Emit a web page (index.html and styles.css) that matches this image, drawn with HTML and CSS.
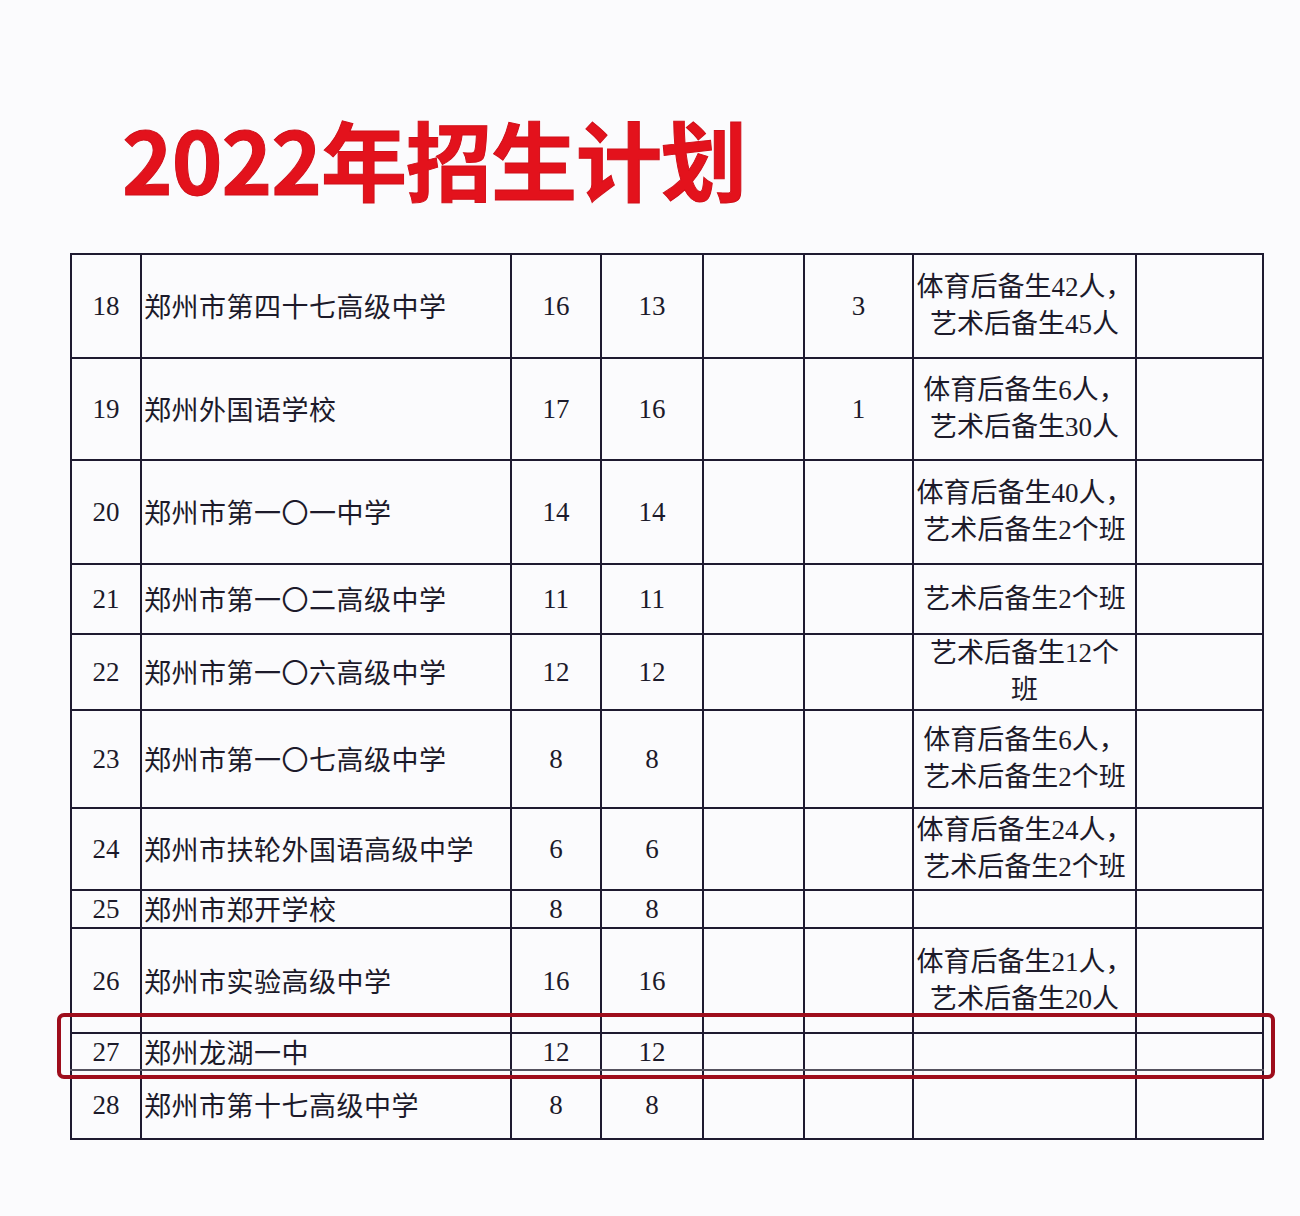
FILE: index.html
```html
<!DOCTYPE html>
<html lang="zh-CN">
<head>
<meta charset="utf-8">
<title>2022年招生计划</title>
<link rel="stylesheet" href="styles.css">
</head>
<body>
<div class="page">
  <h1 class="title">2022年招生计划</h1>
  <div class="table-wrap">
    <table class="plan">
      <colgroup>
        <col class="c-no"><col class="c-name"><col class="c-a"><col class="c-b"><col class="c-c"><col class="c-d"><col class="c-note"><col class="c-last">
      </colgroup>
      <tbody>
        <tr class="h104"><td class="num">18</td><td class="name">郑州市第四十七高级中学</td><td class="num">16</td><td class="num">13</td><td></td><td class="num">3</td><td class="note">体育后备生42人，<br>艺术后备生45人</td><td></td></tr>
        <tr class="h103"><td class="num">19</td><td class="name">郑州外国语学校</td><td class="num">17</td><td class="num">16</td><td></td><td class="num">1</td><td class="note">体育后备生6人，<br>艺术后备生30人</td><td></td></tr>
        <tr class="h104"><td class="num">20</td><td class="name">郑州市第一〇一中学</td><td class="num">14</td><td class="num">14</td><td></td><td></td><td class="note">体育后备生40人，<br>艺术后备生2个班</td><td></td></tr>
        <tr class="h70"><td class="num">21</td><td class="name">郑州市第一〇二高级中学</td><td class="num">11</td><td class="num">11</td><td></td><td></td><td class="note">艺术后备生2个班</td><td></td></tr>
        <tr class="h75"><td class="num">22</td><td class="name">郑州市第一〇六高级中学</td><td class="num">12</td><td class="num">12</td><td></td><td></td><td class="note">艺术后备生12个<br>班</td><td></td></tr>
        <tr class="h99"><td class="num">23</td><td class="name">郑州市第一〇七高级中学</td><td class="num">8</td><td class="num">8</td><td></td><td></td><td class="note">体育后备生6人，<br>艺术后备生2个班</td><td></td></tr>
        <tr class="h81"><td class="num">24</td><td class="name">郑州市扶轮外国语高级中学</td><td class="num">6</td><td class="num">6</td><td></td><td></td><td class="note">体育后备生24人，<br>艺术后备生2个班</td><td></td></tr>
        <tr class="h39"><td class="num">25</td><td class="name">郑州市郑开学校</td><td class="num">8</td><td class="num">8</td><td></td><td></td><td class="note"></td><td></td></tr>
        <tr class="h104b"><td class="num">26</td><td class="name">郑州市实验高级中学</td><td class="num">16</td><td class="num">16</td><td></td><td></td><td class="note">体育后备生21人，<br>艺术后备生20人</td><td></td></tr>
        <tr class="h38 soft"><td class="num">27</td><td class="name">郑州龙湖一中</td><td class="num">12</td><td class="num">12</td><td></td><td></td><td class="note"></td><td></td></tr>
        <tr class="h69"><td class="num">28</td><td class="name">郑州市第十七高级中学</td><td class="num">8</td><td class="num">8</td><td></td><td></td><td class="note"></td><td></td></tr>
      </tbody>
    </table>
    <div class="highlight"></div>
  </div>
</div>
</body>
</html>
```

FILE: styles.css
```css
html, body {
  margin: 0;
  padding: 0;
  background: #fbfbfd;
}

.page {
  width: 1300px;
  min-height: 1216px;
  padding-top: 114px;
  box-sizing: border-box;
}

.title {
  margin: 0 0 51px 122px;
  height: 88px;
  font-family: "Noto Sans CJK SC", "Noto Sans", sans-serif;
  font-weight: 700;
  font-size: 86px;
  line-height: 88px;
  color: #e3121c;
  -webkit-text-stroke: 1px #d0101a;
  letter-spacing: -1px;
  white-space: nowrap;
}

.table-wrap {
  position: relative;
  margin-left: 70px;
  width: 1192px;
}

.plan {
  border-collapse: collapse;
  table-layout: fixed;
  width: 1192px;
  font-family: "Liberation Serif", "Noto Sans CJK SC", serif;
  font-size: 27px;
  line-height: 30px;
  color: #1c1a2a;
}

.plan td {
  border: 2px solid #1e1a30;
  padding: 0;
  vertical-align: middle;
  white-space: nowrap;
  overflow: visible;
}

.c-no { width: 70px; }
.c-name { width: 370px; }
.c-a { width: 90px; }
.c-b { width: 102px; }
.c-c { width: 101px; }
.c-d { width: 109px; }
.c-note { width: 223px; }
.c-last { width: 127px; }

.num {
  text-align: center;
}

.name {
  text-align: left;
  padding-left: 2px !important;
  font-family: "Noto Sans CJK SC", sans-serif;
  letter-spacing: 0.5px;
}

.note {
  text-align: center;
  line-height: 37px;
  font-size: 27px;
}

.h104 { height: 104px; }
.h104b { height: 105px; }
.h103 { height: 102px; }
.h70 { height: 70px; }
.h75 { height: 74px; }
.h99 { height: 98px; }
.h81 { height: 82px; }
.h39 { height: 38px; }
.h38 { height: 37px; }
.h69 { height: 69px; }

.plan tr.soft td {
  border-top-color: #55525f;
  border-bottom-color: #55525f;
}

.highlight {
  position: absolute;
  left: -13px;
  top: 760px;
  width: 1218px;
  height: 66px;
  box-sizing: border-box;
  border: 4px solid #9e0d1c;
  border-radius: 7px;
  pointer-events: none;
}
```
